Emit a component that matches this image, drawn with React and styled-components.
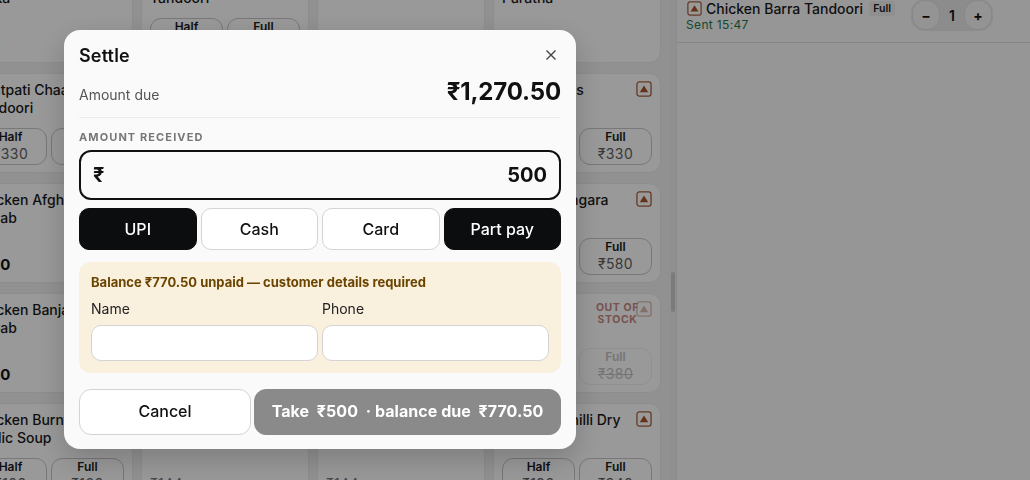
import React from "react";
import styled, { createGlobalStyle } from "styled-components";

const Global = createGlobalStyle`
  html, body { margin: 0; padding: 0; height: 100%; overflow: hidden; }
  body { font-family: Inter, "Noto Sans", sans-serif; background: #f2f2f2; color: #111; }
  * { box-sizing: border-box; }
`;

const Page = styled.div`
  display: flex;
  width: 1030px;
  height: 480px;
  overflow: hidden;
`;
const MenuArea = styled.div`
  width: 670px;
  height: 480px;
  flex: none;
  overflow: hidden;
`;
const MenuGrid = styled.div`
  display: grid;
  grid-template-columns: repeat(4, 168px);
  grid-auto-rows: 100px;
  column-gap: 8px;
  row-gap: 10px;
  margin: -37px 0 0 -35px;
`;
const Card = styled.div`
  display: flex;
  flex-direction: column;
  justify-content: space-between;
  padding: 7px 8px;
  background: #fff;
  border: 1px solid #ececec;
  border-radius: 12px;
`;
const CardHead = styled.div`
  display: flex;
  justify-content: space-between;
  align-items: flex-start;
  gap: 4px;
`;
const ItemName = styled.div`
  font-size: 14px;
  font-weight: 500;
  line-height: 18px;
  color: #1a1a1a;
`;
const OutLabel = styled.div`
  margin: 1px -7px 0 auto;
  font-size: 10.5px;
  font-weight: 700;
  line-height: 12px;
  letter-spacing: 0.6px;
  text-align: center;
  color: #c98a86;
`;
const Badge = styled.svg`
  flex: none;
  width: ${(p) => p.$size}px;
  height: ${(p) => p.$size}px;
  opacity: ${(p) => (p.$faded ? 0.4 : 1)};
`;
const Sizes = styled.div`
  display: grid;
  grid-template-columns: 73px 73px;
  gap: 4px;
`;
const SizeBtn = styled.div`
  height: 37px;
  border: 1px solid ${(p) => (p.$out ? "#f0f0f0" : "#c8c8c8")};
  border-radius: 11px;
  text-align: center;
  font-size: 12px;
  line-height: 15px;
  font-weight: 600;
  color: ${(p) => (p.$out ? "#c4c4c4" : "#1a1a1a")};
`;
const SizePrice = styled.div`
  font-size: 14px;
  line-height: 19px;
  font-weight: 400;
  letter-spacing: 0.4px;
  color: ${(p) => (p.$out ? "#c4c4c4" : "#5f5f5f")};
  text-decoration: ${(p) => (p.$out ? "line-through" : "none")};
`;
const BigPrice = styled.div`
  font-size: 15px;
  font-weight: 700;
  line-height: 20px;
  margin-left: -2px;
`;
const FlatPrice = styled.div`
  font-size: 14px;
  line-height: 19px;
  margin-bottom: 2px;
  letter-spacing: 0.4px;
  color: #777;
`;
const Track = styled.div`
  width: 6px;
  flex: none;
  background: #efefef;
  padding-top: 272px;
`;
const Thumb = styled.div`
  width: 4px;
  margin-left: 1px;
  height: 40px;
  background: #cdcdcd;
  border-radius: 2px;
`;
const OrderPanel = styled.aside`
  flex: 1;
  background: #fafafa;
  border-left: 1px solid #e8e8e8;
`;
const OrderRow = styled.div`
  display: flex;
  justify-content: space-between;
  height: 44px;
  margin-top: -1px;
  padding: 0 37px 0 10px;
  border-bottom: 1px solid #dedede;
`;
const OrderTitle = styled.div`
  display: flex;
  align-items: center;
  height: 18px;
  gap: 4px;
  font-size: 14px;
  font-weight: 500;
  white-space: nowrap;
  color: #1a1a1a;
`;
const SizeTag = styled.span`
  font-size: 10.5px;
  font-weight: 600;
  padding: 1px 4px;
  margin-left: 2px;
  background: #efefef;
  border-radius: 4px;
`;
const Sent = styled.div`
  margin-left: -1px;
  font-size: 12px;
  line-height: 16px;
  letter-spacing: 0.35px;
  color: #1f7a4d;
`;
const Stepper = styled.div`
  display: flex;
  align-items: center;
  width: 82px;
  height: 32px;
  background: #e9e9e9;
  border-radius: 14px;
  padding: 0 1px;
`;
const StepBtn = styled.div`
  width: 28px;
  height: 30px;
  display: flex;
  align-items: center;
  justify-content: center;
  font-size: 14px;
  font-weight: 700;
  background: #f7f7f7;
  border: 1px solid #e2e2e2;
  border-radius: 13px;
`;
const Qty = styled.div`
  flex: 1;
  text-align: center;
  font-size: 14px;
  font-weight: 600;
`;

const Overlay = styled.div`
  position: fixed;
  inset: 0;
  display: flex;
  align-items: center;
  justify-content: center;
  padding: 0 390px 1px 0;
  background: rgba(0, 0, 0, 0.4);
`;
const Modal = styled.div`
  width: 512px;
  height: 419px;
  padding: 15px;
  background: #fafafa;
  border-radius: 16px;
  box-shadow: 0 10px 30px rgba(0, 0, 0, 0.2);
`;
const ModalHead = styled.div`
  display: flex;
  justify-content: space-between;
  align-items: center;
  height: 20px;
`;
const Title = styled.h2`
  margin: 0;
  font-size: 18px;
  font-weight: 600;
  letter-spacing: 0.15px;
  color: #111;
`;
const CloseIcon = styled.svg`
  width: 12px;
  height: 12px;
  margin-right: 4px;
  stroke: #444;
  stroke-width: 1.4;
  fill: none;
`;
const DueRow = styled.div`
  display: flex;
  justify-content: space-between;
  align-items: flex-end;
  margin-top: 12px;
  padding-bottom: 11px;
  border-bottom: 1px solid #ececec;
`;
const DueLabel = styled.span`
  font-size: 14px;
  line-height: 16px;
  margin-bottom: 3px;
  color: #555;
`;
const DueValue = styled.span`
  font-size: 24px;
  line-height: 29px;
  font-weight: 700;
  letter-spacing: -0.15px;
  color: #111;
`;
const SectionLabel = styled.div`
  margin-top: 13px;
  font-size: 11px;
  line-height: 13px;
  font-weight: 700;
  letter-spacing: 1.1px;
  color: #777;
`;
const AmountBox = styled.div`
  display: flex;
  justify-content: space-between;
  align-items: center;
  height: 50px;
  margin-top: 6px;
  padding: 0 12px;
  border: 2px solid #111;
  border-radius: 12px;
  font-size: 20px;
  font-weight: 700;
  color: #111;
`;
const PayGrid = styled.div`
  display: grid;
  grid-template-columns: repeat(4, 1fr);
  gap: 4px;
  margin-top: 8px;
`;
const PayBtn = styled.div`
  height: 42px;
  display: flex;
  align-items: center;
  justify-content: center;
  font-size: 16px;
  font-weight: 500;
  border-radius: 10px;
  background: ${(p) => (p.$on ? "#0c0d0f" : "#fff")};
  color: ${(p) => (p.$on ? "#fff" : "#111")};
  border: 1px solid ${(p) => (p.$on ? "#0c0d0f" : "#d4d4d4")};
`;
const BalanceBox = styled.div`
  margin-top: 12px;
  height: 111px;
  padding: 12px 12px 0;
  background: #f9f0de;
  border-radius: 12px;
`;
const BalanceText = styled.div`
  font-size: 13px;
  line-height: 16px;
  font-weight: 700;
  color: #6b4500;
`;
const Fields = styled.div`
  display: grid;
  grid-template-columns: 1fr 1fr;
  gap: 4px;
  margin-top: 10px;
`;
const Field = styled.label`
  display: block;
  font-size: 14px;
  line-height: 17px;
  color: #222;
`;
const TextBox = styled.div`
  height: 36px;
  margin-top: 8px;
  background: #fff;
  border: 1px solid #d4d4d4;
  border-radius: 10px;
`;
const Actions = styled.div`
  display: grid;
  grid-template-columns: 172px 1fr;
  gap: 3px;
  margin-top: 16px;
`;
const CancelBtn = styled.div`
  height: 46px;
  display: flex;
  align-items: center;
  justify-content: center;
  padding-bottom: 2px;
  font-size: 16px;
  font-weight: 500;
  color: #111;
  background: #fff;
  border: 1px solid #d4d4d4;
  border-radius: 12px;
`;
const TakeBtn = styled(CancelBtn)`
  font-weight: 700;
  letter-spacing: 0.05px;
  color: #fff;
  background: #8a8a8a;
  border-color: #8a8a8a;
  white-space: pre;
`;

const Veg = ({ faded, size = 16 }) => (
  <Badge $faded={faded} $size={size} viewBox="0 0 17 17">
    <rect x="1" y="1" width="15" height="15" rx="2.5" fill="#fff" stroke="#a8623f" strokeWidth="1.4" />
    <path d="M8.5 4.8 L13 12 H4 Z" fill="#a8522a" />
  </Badge>
);

const S = (n, p, out) => (
  <SizeBtn $out={out} key={n}>
    {n}
    <SizePrice $out={out}>{p}</SizePrice>
  </SizeBtn>
);

const Item = ({ name, sizes, big, flat, out }) => (
  <Card>
    <CardHead>
      <ItemName>{name}</ItemName>
      {out && <OutLabel>OUT OF<br />STOCK</OutLabel>}
      <Veg faded={out} />
    </CardHead>
    {big && <BigPrice>{big}</BigPrice>}
    {flat && <FlatPrice>{flat}</FlatPrice>}
    {sizes && <Sizes>{sizes.map(([n, p]) => S(n, p, out))}</Sizes>}
  </Card>
);

const items = [
  { name: "Achari Paneer Tikka", big: "₹90" },
  { name: "Chicken Tikka Tandoori", sizes: [["Half", "₹280"], ["Full", "₹520"]] },
  { name: "Butter Naan", big: "₹90" },
  { name: "Malabari Lachha Paratha", big: "₹70" },
  { name: "Chatpati Chaap Tandoori", sizes: [["Half", "₹330"], ["Full", "₹330"]] },
  { name: "Chicken Kebabs", sizes: [["Half", "₹330"], ["Full", "₹330"]] },
  { name: "Chicken Reshmi", sizes: [["Half", "₹330"], ["Full", "₹330"]] },
  { name: "Fish Kebabs", sizes: [["Half", "₹180"], ["Full", "₹330"]] },
  { name: "Chicken Afghani Kabab", big: "₹450" },
  { name: "Chicken Seekh", big: "₹350" },
  { name: "Chicken Malai", big: "₹350" },
  { name: "Chicken Angara", sizes: [["Half", "₹320"], ["Full", "₹580"]] },
  { name: "Chicken Banjara Kabab", big: "₹420" },
  { name: "Chicken Hara", big: "₹350" },
  { name: "Chicken Pahadi", big: "₹350" },
  { name: "Chicken", sizes: [["Half", "₹220"], ["Full", "₹380"]], out: true },
  { name: "Chicken Burnt Garlic Soup", sizes: [["Half", "₹100"], ["Full", "₹180"]] },
  { name: "Chicken Soup", flat: "₹144" },
  { name: "Chicken Soup", flat: "₹144" },
  { name: "Chicken Chilli Dry", sizes: [["Half", "₹190"], ["Full", "₹340"]] },
];

export default function App() {
  return (
    <>
      <Global />
      <Page>
        <MenuArea>
          <MenuGrid>
            {items.map((it, i) => <Item key={i} {...it} />)}
          </MenuGrid>
        </MenuArea>
        <Track><Thumb /></Track>
        <OrderPanel>
          <OrderRow>
            <div>
              <OrderTitle>
                <Veg size={15} />
                Chicken Barra Tandoori
                <SizeTag>Full</SizeTag>
              </OrderTitle>
              <Sent>Sent 15:47</Sent>
            </div>
            <Stepper>
              <StepBtn>−</StepBtn>
              <Qty>1</Qty>
              <StepBtn>+</StepBtn>
            </Stepper>
          </OrderRow>
        </OrderPanel>
      </Page>
      <Overlay>
        <Modal>
          <ModalHead>
            <Title>Settle</Title>
            <CloseIcon viewBox="0 0 12 12"><path d="M1.5 1.5 L10.5 10.5 M10.5 1.5 L1.5 10.5" /></CloseIcon>
          </ModalHead>
          <DueRow>
            <DueLabel>Amount due</DueLabel>
            <DueValue>₹1,270.50</DueValue>
          </DueRow>
          <SectionLabel>AMOUNT RECEIVED</SectionLabel>
          <AmountBox>
            <span>₹</span>
            <span>500</span>
          </AmountBox>
          <PayGrid>
            <PayBtn $on>UPI</PayBtn>
            <PayBtn>Cash</PayBtn>
            <PayBtn>Card</PayBtn>
            <PayBtn $on>Part pay</PayBtn>
          </PayGrid>
          <BalanceBox>
            <BalanceText>Balance ₹770.50 unpaid — customer details required</BalanceText>
            <Fields>
              <Field>Name<TextBox /></Field>
              <Field>Phone<TextBox /></Field>
            </Fields>
          </BalanceBox>
          <Actions>
            <CancelBtn>Cancel</CancelBtn>
            <TakeBtn>{"Take  ₹500  · balance due  ₹770.50"}</TakeBtn>
          </Actions>
        </Modal>
      </Overlay>
    </>
  );
}
